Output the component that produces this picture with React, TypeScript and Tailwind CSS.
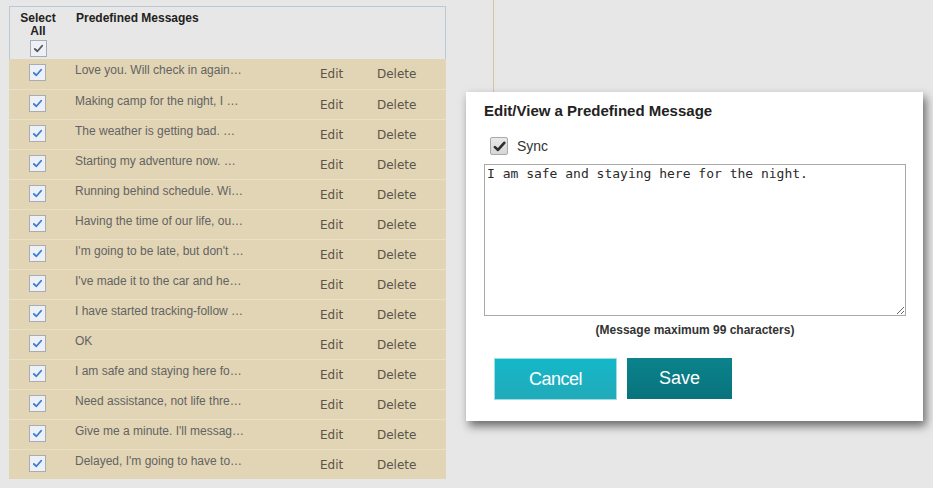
import React, { useState } from "react";

const messages = [
  "Love you. Will check in again…",
  "Making camp for the night, I …",
  "The weather is getting bad. …",
  "Starting my adventure now. …",
  "Running behind schedule. Wi…",
  "Having the time of our life, ou…",
  "I'm going to be late, but don't …",
  "I've made it to the car and he…",
  "I have started tracking-follow …",
  "OK",
  "I am safe and staying here fo…",
  "Need assistance, not life thre…",
  "Give me a minute. I'll messag…",
  "Delayed, I'm going to have to…",
];

const Check = ({ color }: { color: string }) => (
  <svg width="11" height="11" viewBox="0 0 12 12">
    <path d="M2 6.5 L4.8 9 L10 3" fill="none" stroke={color} strokeWidth="2" strokeLinecap="round" strokeLinejoin="round" />
  </svg>
);

const RowBox = ({ gray }: { gray?: boolean }) => (
  <div className="w-[17px] h-[17px] border border-[#a8acb3] bg-[#edf1f7] flex items-center justify-center">
    <Check color={gray ? "#555" : "#3a7dd6"} />
  </div>
);

export default function App() {
  const [text, setText] = useState("I am safe and staying here for the night.");
  const [sync, setSync] = useState(true);

  return (
    <div className="relative w-[933px] h-[488px] bg-[#e7e7e7] overflow-hidden font-['Liberation_Sans',Arial,sans-serif]">
      <div className="flex">
        {/* Messages table */}
        <div className="ml-[9px] mt-[6px] w-[437px]">
          <div className="h-[53px] border-t border-l border-r border-[#b9c9da] flex text-[12px] font-bold text-[#222] leading-[13px]">
            <div className="w-[56px] flex flex-col items-center pt-[5px]">
              <span>Select</span>
              <span>All</span>
              <div className="mt-[2px]">
                <RowBox gray />
              </div>
            </div>
            <div className="pl-[10px] pt-[5px]">Predefined Messages</div>
          </div>
          <div className="bg-[#e2d5b5]">
            {messages.map((m, i) => (
              <div
                key={i}
                className={`h-[30px] flex ${i > 0 ? "border-t border-[#ebe0c3]" : ""}`}
              >
                <div className="w-[56px] flex justify-center pt-[5px]">
                  <RowBox />
                </div>
                <div className="w-[255px] pl-[10px] pt-[4px] text-[12px] leading-[14px] text-[#636363] whitespace-nowrap">
                  {m}
                </div>
                <div className="w-[57px] pt-[8px] text-[12px] leading-[14px] text-[#5a544a] font-['DejaVu_Sans',Verdana,sans-serif]">
                  Edit
                </div>
                <div className="pt-[8px] text-[12px] leading-[14px] text-[#5a544a] font-['DejaVu_Sans',Verdana,sans-serif]">
                  Delete
                </div>
              </div>
            ))}
          </div>
        </div>
        <div className="ml-[47px] h-[92px] border-l border-[#d9c3a3]" />
      </div>

      {/* Edit dialog */}
      <div className="absolute left-[466px] top-[92px] w-[457px] h-[329px] bg-white shadow-[3px_5px_9px_rgba(0,0,0,0.55)] pt-[10px] pl-[18px]">
        <div className="text-[15px] font-bold text-[#222] leading-[17px]">
          Edit/View a Predefined Message
        </div>
        <label className="flex items-center mt-[18px] ml-[6px] h-[18px] cursor-pointer" onClick={() => setSync(!sync)}>
          <div className="w-[18px] h-[18px] border border-[#a9a9a9] rounded-[2px] bg-gradient-to-b from-[#e9e9e9] to-[#d6d6d6] flex items-center justify-center">
            {sync && (
              <svg width="13" height="13" viewBox="0 0 12 12">
                <path d="M1.8 6.6 L4.6 9.2 L10.4 2.6" fill="none" stroke="#2e2e2e" strokeWidth="2.4" strokeLinecap="round" strokeLinejoin="round" />
              </svg>
            )}
          </div>
          <span className="ml-[9px] text-[14px] text-[#333] leading-[16px]">Sync</span>
        </label>
        <textarea
          value={text}
          onChange={(e) => setText(e.target.value)}
          className="block mt-[9px] w-[422px] h-[152px] border border-[#a9a9a9] px-[2px] pt-[1px] text-[13px] leading-[16px] text-[#2a2a2a] font-['DejaVu_Sans_Mono','Liberation_Mono',monospace] outline-none resize"
        />
        <div className="w-[422px] text-center mt-[7px] text-[12px] font-bold text-[#333] leading-[14px]">
          (Message maximum 99 characters)
        </div>
        <div className="flex items-start mt-[21px] ml-[10px] gap-[10px]">
          <button className="w-[123px] h-[42px] bg-gradient-to-b from-[#12b8c8] to-[#21aab9] border border-[#9fdde4] text-white text-[18px] leading-[20px] tracking-[-0.5px]">
            Cancel
          </button>
          <button className="w-[105px] h-[41px] bg-gradient-to-b from-[#0b838c] to-[#08737c] text-white text-[18px] leading-[20px] pb-[2px]">
            Save
          </button>
        </div>
      </div>
    </div>
  );
}
